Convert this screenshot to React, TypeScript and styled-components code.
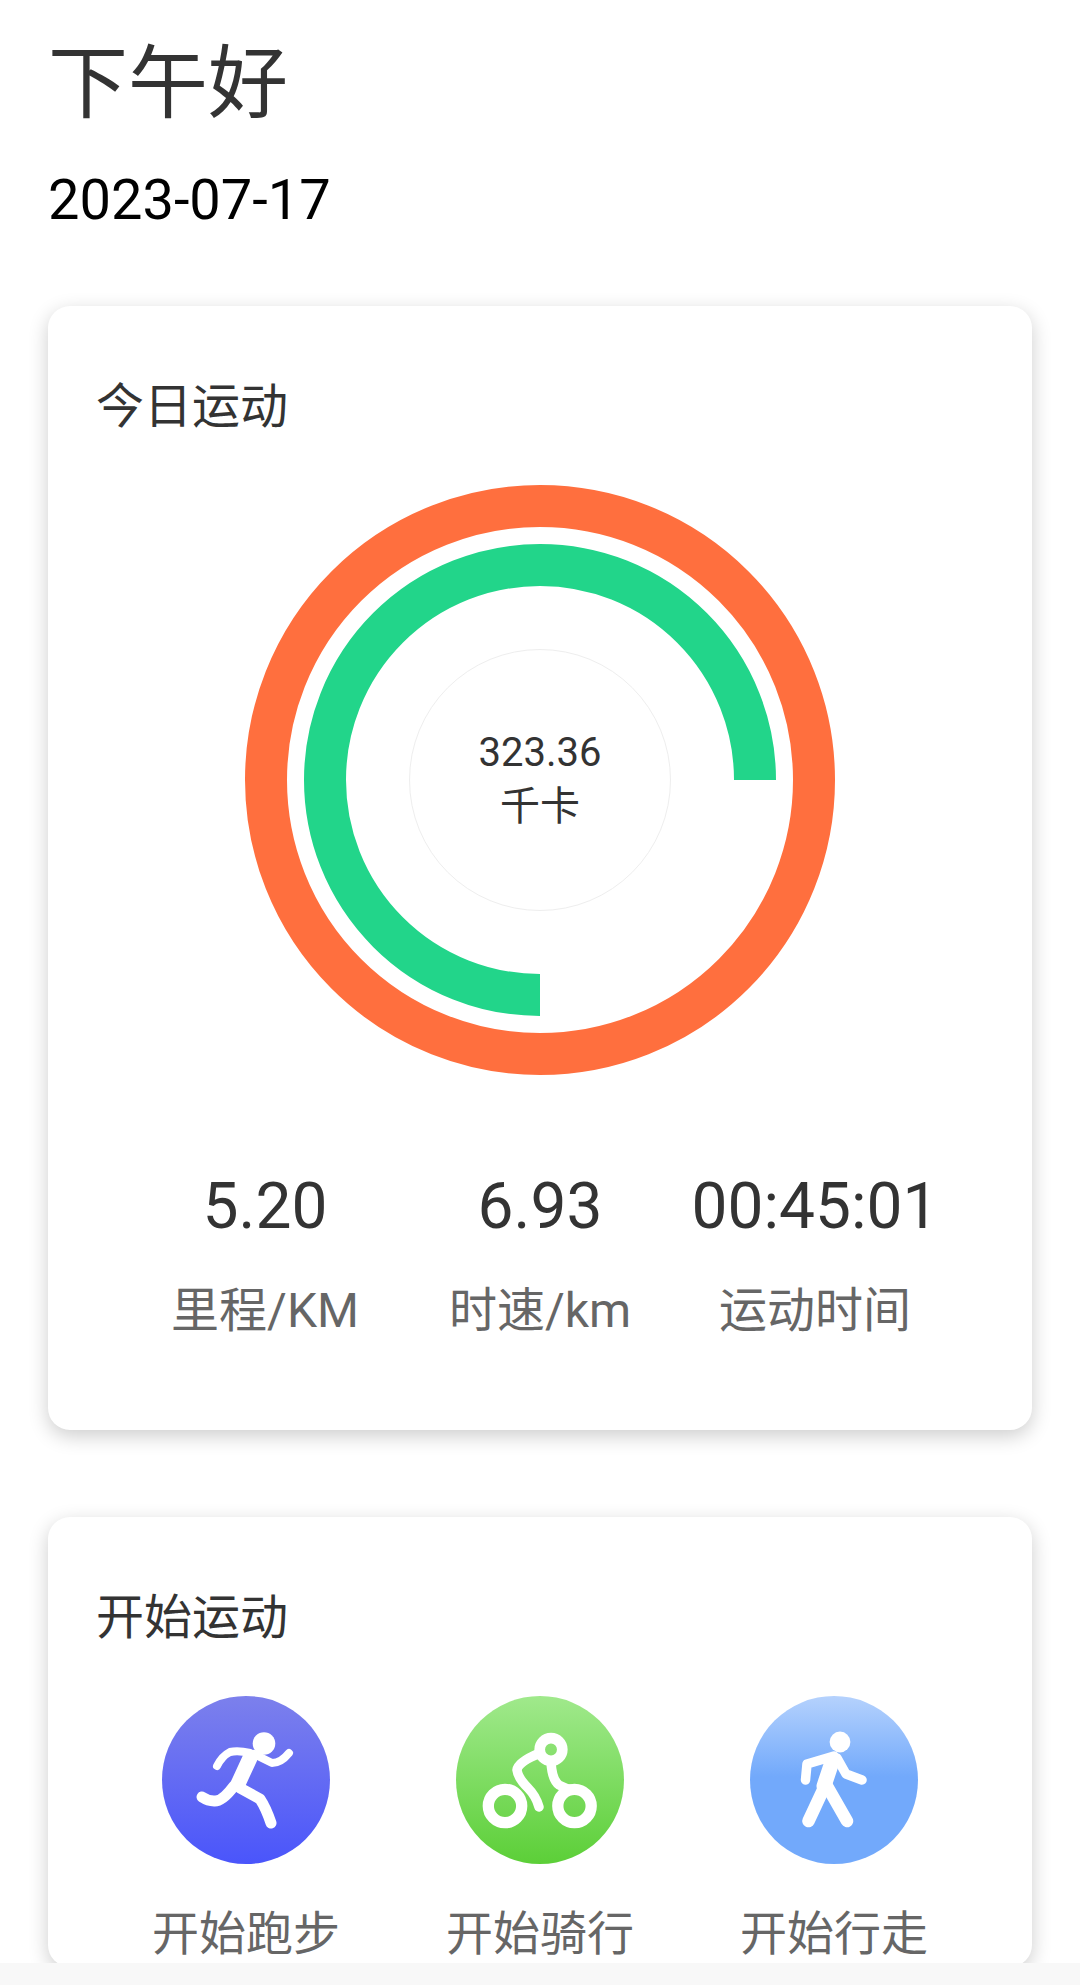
import styled, { createGlobalStyle } from "styled-components";

const GlobalStyle = createGlobalStyle`
  html, body {
    margin: 0;
    padding: 0;
    background: #fff;
  }
  * {
    box-sizing: border-box;
  }
`;

const stats = [
  { value: "5.20", label: "里程/KM" },
  { value: "6.93", label: "时速/km" },
  { value: "00:45:01", label: "运动时间" },
];

function RunIcon() {
  return (
    <svg width="168" height="168" viewBox="0 0 168 168" fill="none" stroke="#fff" strokeLinecap="round" strokeLinejoin="round">
      <circle cx="102" cy="47.5" r="11.3" fill="#fff" stroke="none" />
      <path d="M92 58 L110 67 Q119 67 127 57" strokeWidth="8" />
      <path d="M88 57 Q76 54 68 56 Q60 60 55 70" strokeWidth="8" />
      <path d="M88 62 L76 88" strokeWidth="15" />
      <path d="M72 90 Q60 106 52 105 Q46 105 40 101" strokeWidth="11" />
      <path d="M78 92 L98 103 Q104 112 109 127" strokeWidth="11" />
    </svg>
  );
}

function BikeIcon() {
  return (
    <svg width="168" height="168" viewBox="0 0 168 168" fill="none" stroke="#fff" strokeLinecap="round" strokeLinejoin="round">
      <circle cx="49" cy="110" r="16.7" strokeWidth="11.3" />
      <circle cx="118.5" cy="110" r="16.7" strokeWidth="11.3" />
      <circle cx="95" cy="53.5" r="11.3" strokeWidth="10.7" />
      <path d="M84 57 Q62 66 61 74 Q62 82 72 92 Q80 100 83 111" strokeWidth="9.5" />
      <path d="M95 66 Q96 84 103 89 Q110 93 118 94" strokeWidth="9.5" />
    </svg>
  );
}

function WalkIcon() {
  return (
    <svg width="168" height="168" viewBox="0 0 168 168" fill="none" stroke="#fff" strokeLinecap="round" strokeLinejoin="round">
      <circle cx="90" cy="46" r="10.4" fill="#fff" stroke="none" />
      <path d="M84 60 L57 68 L55.5 84" strokeWidth="9.5" />
      <path d="M87 62 L96 78 L112 84" strokeWidth="9.5" />
      <path d="M82 66 L74 90" strokeWidth="15" />
      <path d="M73 94 L58.5 125" strokeWidth="12.5" />
      <path d="M77 90 L97 125" strokeWidth="12.5" />
    </svg>
  );
}

const actions = [
  { label: "开始跑步", from: "#7c80ec", to: "#4a55fb", stop: "100%", icon: <RunIcon /> },
  { label: "开始骑行", from: "#a0e98c", to: "#5ccf38", stop: "100%", icon: <BikeIcon /> },
  { label: "开始行走", from: "#b5d2fd", to: "#72a9fb", stop: "48%", icon: <WalkIcon /> },
];

export default function App() {
  return (
    <Page>
      <GlobalStyle />
      <Header>
        <Greeting>下午好</Greeting>
        <DateText>2023-07-17</DateText>
      </Header>

      <TodayCard>
        <CardTitle>今日运动</CardTitle>
        <Chart>
          <svg width="590" height="590" viewBox="0 0 590 590" fill="none">
            <circle cx="295" cy="295" r="274" stroke="#ff6f3e" strokeWidth="42" />
            <path d="M295 510 A215 215 0 1 1 510 295" stroke="#22d58a" strokeWidth="42" />
          </svg>
          <ChartCenter>
            <Kcal>323.36</Kcal>
            <Kcal>千卡</Kcal>
          </ChartCenter>
        </Chart>
        <StatRow>
          {stats.map((s) => (
            <Stat key={s.label}>
              <StatValue>{s.value}</StatValue>
              <StatLabel>{s.label}</StatLabel>
            </Stat>
          ))}
        </StatRow>
      </TodayCard>

      <StartCard>
        <CardTitle>开始运动</CardTitle>
        <ActionRow>
          {actions.map((a) => (
            <Action key={a.label}>
              <ActionCircle $from={a.from} $to={a.to} $stop={a.stop}>
                {a.icon}
              </ActionCircle>
              <ActionLabel>{a.label}</ActionLabel>
            </Action>
          ))}
        </ActionRow>
      </StartCard>

      <BottomBar />
    </Page>
  );
}

const fontStack = `Roboto, "Noto Sans CJK SC", sans-serif`;

const Page = styled.div`
  position: relative;
  width: 1080px;
  height: 1985px;
  overflow: hidden;
  padding: 44px 48px 0;
  background: #fff;
  font-family: ${fontStack};
`;

const Header = styled.div`
  display: flex;
  flex-direction: column;
  gap: 48px;
  margin-bottom: 78px;
`;

const Greeting = styled.div`
  font-size: 80px;
  line-height: 80px;
  color: #333;
`;

const DateText = styled.div`
  font-size: 56px;
  line-height: 56px;
  color: #000;
`;

const Card = styled.div`
  width: 984px;
  background: #fff;
  border-radius: 22px;
  box-shadow: 0 6px 20px rgba(0, 0, 0, 0.2);
`;

const TodayCard = styled(Card)`
  height: 1124px;
  padding: 77px 0 0;
  margin-bottom: 87px;
`;

const StartCard = styled(Card)`
  height: 450px;
  padding: 77px 0 0;
`;

const CardTitle = styled.div`
  padding-left: 48px;
  font-size: 48px;
  line-height: 48px;
  color: #333;
`;

const Chart = styled.div`
  display: grid;
  justify-items: center;
  align-items: center;
  margin-top: 54px;

  & > * {
    grid-area: 1 / 1;
  }

  svg {
    display: block;
  }
`;

const ChartCenter = styled.div`
  width: 262px;
  height: 262px;
  border-radius: 50%;
  border: 1px solid #eee;
  display: flex;
  flex-direction: column;
  align-items: center;
  justify-content: center;
`;

const Kcal = styled.div`
  font-size: 40px;
  line-height: 54px;
  color: #333;
`;

const StatRow = styled.div`
  display: grid;
  grid-template-columns: repeat(3, 275px);
  justify-content: center;
  margin-top: 100px;
`;

const Stat = styled.div`
  display: flex;
  flex-direction: column;
  align-items: center;
`;

const StatValue = styled.div`
  font-size: 64px;
  line-height: 64px;
  color: #333;
`;

const StatLabel = styled.div`
  margin-top: 48px;
  font-size: 48px;
  line-height: 48px;
  color: #666;
`;

const ActionRow = styled.div`
  display: grid;
  grid-template-columns: repeat(3, 294px);
  justify-content: center;
  margin-top: 54px;
`;

const Action = styled.div`
  display: flex;
  flex-direction: column;
  align-items: center;
`;

const ActionCircle = styled.div<{ $from: string; $to: string; $stop: string }>`
  width: 168px;
  height: 168px;
  border-radius: 50%;
  background: linear-gradient(180deg, ${(p) => p.$from} 0%, ${(p) => p.$to} ${(p) => p.$stop});

  svg {
    display: block;
  }
`;

const ActionLabel = styled.div`
  margin-top: 46px;
  font-size: 47px;
  line-height: 48px;
  color: #666;
  white-space: nowrap;
`;

const BottomBar = styled.div`
  position: absolute;
  left: 0;
  right: 0;
  bottom: 0;
  height: 22px;
  background: #f8f8f8;
`;
